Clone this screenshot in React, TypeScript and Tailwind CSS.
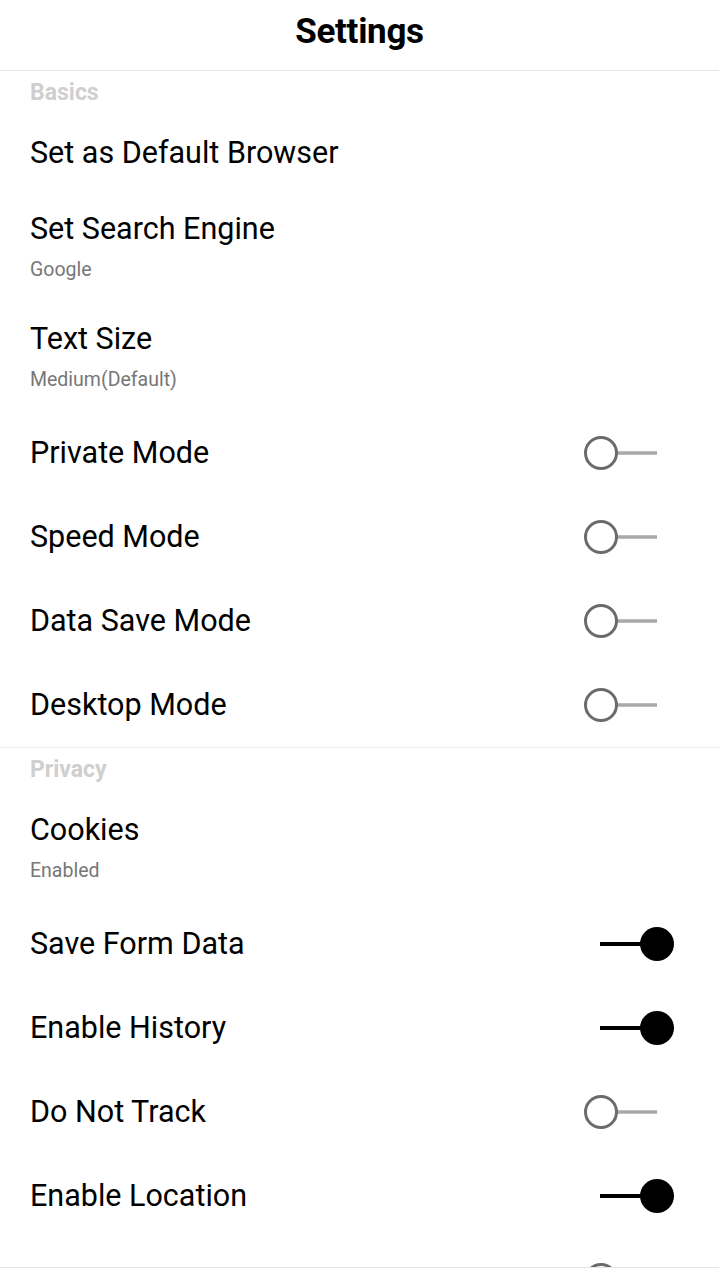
import React from 'react'

type Item = {
  title: string
  sub?: string
  toggle?: 'on' | 'off'
}

const basics: Item[] = [
  { title: 'Set as Default Browser' },
  { title: 'Set Search Engine', sub: 'Google' },
  { title: 'Text Size', sub: 'Medium(Default)' },
  { title: 'Private Mode', toggle: 'off' },
  { title: 'Speed Mode', toggle: 'off' },
  { title: 'Data Save Mode', toggle: 'off' },
  { title: 'Desktop Mode', toggle: 'off' },
]

const privacy: Item[] = [
  { title: 'Cookies', sub: 'Enabled' },
  { title: 'Save Form Data', toggle: 'on' },
  { title: 'Enable History', toggle: 'on' },
  { title: 'Do Not Track', toggle: 'off' },
  { title: 'Enable Location', toggle: 'on' },
  { title: 'Clear Cache', toggle: 'off' },
]

function Toggle({ on }: { on: boolean }) {
  return (
    <svg width="92" height="36" viewBox="0 0 92 36">
      {on ? (
        <>
          <line x1="17" y1="18" x2="60" y2="18" stroke="#000" strokeWidth="4" />
          <circle cx="74" cy="18" r="17" fill="#000" />
        </>
      ) : (
        <>
          <line x1="34" y1="18" x2="74" y2="18" stroke="#a8a8a8" strokeWidth="3.5" />
          <circle cx="18" cy="18" r="15.5" fill="#fff" stroke="#6b6b6b" strokeWidth="3" />
        </>
      )}
    </svg>
  )
}

function Row({ item }: { item: Item }) {
  if (item.sub) {
    return (
      <div className="h-[110px] pl-[30px] pr-[44px] pt-5">
        <div className="text-[30.5px] leading-[36px] text-black">{item.title}</div>
        <div className="mt-[11px] text-[19.5px] leading-[24px] text-[#777]">{item.sub}</div>
      </div>
    )
  }
  if (item.toggle) {
    return (
      <div className="h-[84px] pl-[30px] pr-[44px] flex items-center justify-between">
        <div className="text-[30.5px] leading-[36px] text-black">{item.title}</div>
        <Toggle on={item.toggle === 'on'} />
      </div>
    )
  }
  return (
    <div className="h-[76px] pl-[30px] pr-[44px] flex items-center">
      <div className="text-[30.5px] leading-[36px] text-black">{item.title}</div>
    </div>
  )
}

function Section({ name, items, border }: { name: string; items: Item[]; border?: boolean }) {
  return (
    <div className={border ? 'border-b border-[#ececec]' : ''}>
      <div className="h-[44px] pl-[30px] flex items-center text-[23px] font-bold text-[#cfcfcf]">
        {name}
      </div>
      {items.map((it) => (
        <Row key={it.title} item={it} />
      ))}
    </div>
  )
}

export default function App() {
  return (
    <div
      className="w-[719px] h-[1280px] bg-white overflow-hidden relative flex flex-col"
      style={{ fontFamily: 'Roboto, "Noto Sans", sans-serif' }}
    >
      <header className="h-[71px] shrink-0 border-b border-[#e6e6e6] flex items-center justify-center pb-[6px]">
        <h1 className="text-[35px] font-bold text-black tracking-[-0.3px]">Settings</h1>
      </header>
      <div className="flex-1 overflow-hidden">
        <Section name="Basics" items={basics} border />
        <Section name="Privacy" items={privacy} />
      </div>
      <div className="absolute left-0 right-0 bottom-0 h-[13px] bg-white border-t border-[#e6e6e6]" />
    </div>
  )
}
